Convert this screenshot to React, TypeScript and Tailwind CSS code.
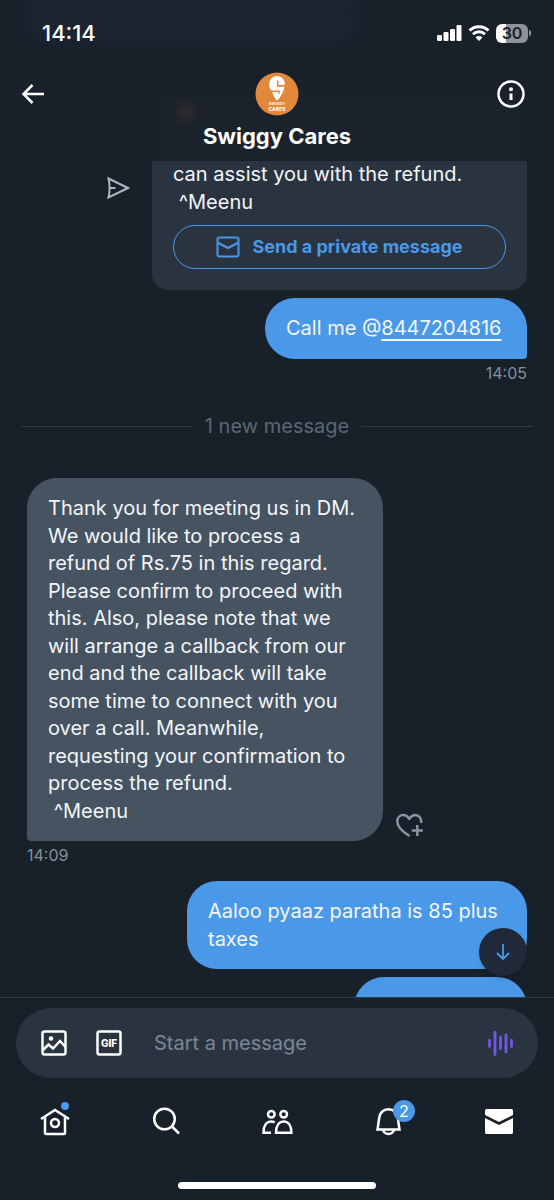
import type { ReactNode } from "react";

type IconProps = { children: ReactNode; className?: string };

function Icon({ children, className = "size-8" }: IconProps) {
  return (
    <svg viewBox="0 0 32 32" className={className} fill="none" stroke="currentColor" strokeWidth="2.5" aria-hidden="true">
      {children}
    </svg>
  );
}

function StatusBar() {
  return (
    <div className="flex items-center justify-between pt-[19px] pr-[23px] pl-[42px]">
      <span className="text-[22px] leading-7 font-medium">14:14</span>
      <div className="flex items-center gap-1.5">
        <svg viewBox="0 0 26 18" className="h-[18px] w-[26px]" fill="currentColor" aria-hidden="true">
          <rect x="1" y="11" width="5" height="6" rx="1.2" />
          <rect x="7.5" y="8" width="5" height="9" rx="1.2" />
          <rect x="14" y="5" width="5" height="12" rx="1.2" />
          <rect x="20.5" y="1" width="5" height="16" rx="1.2" />
        </svg>
        <svg viewBox="0 0 22 18" className="h-[18px] w-[22px]" fill="none" stroke="currentColor" strokeWidth="3" aria-hidden="true">
          <path d="M1.5 6.5a13.6 13.6 0 0 1 19 0" />
          <path d="M5 10.2a8.6 8.6 0 0 1 12 0" />
          <path d="M11 17 7.6 13.5a4.8 4.8 0 0 1 6.8 0Z" fill="currentColor" stroke="none" />
        </svg>
        <div className="flex items-center gap-px">
          <span className="flex h-[19px] w-8 items-center justify-center rounded-md bg-linear-to-r from-white from-30% to-[#8f929b] to-30% text-base font-semibold text-[#1a212b]">
            30
          </span>
          <span className="h-1.5 w-0.5 rounded-r bg-[#8f929b]" />
        </div>
      </div>
    </div>
  );
}

function Avatar() {
  return (
    <svg viewBox="0 0 44 44" className="size-11" role="img" aria-label="Swiggy Cares">
      <circle cx="22" cy="22" r="21.5" fill="#e2883c" />
      <path
        d="M22 28.5c-.6 0-3.6-5-4.6-7.5-.3-.8.1-1 .8-1h5.1v1.8h1.5v-3.3h-8.3c-1.500-1.300-2.300-3.300-2.300-5.700 0-4.800 3.300-8.800 7.800-8.800s7.900 3.700 7.900 8.100c0 .6-.3.9-1 .9h-5.400V8.500h-1.600v6.200h7.500c-.3 4.600-5.800 13.800-7.400 13.800Z"
        fill="#fff"
      />
      <text x="22" y="33" textAnchor="middle" fontSize="4" fontWeight="600" fill="#fff">SWIGGY</text>
      <text x="22" y="38.5" textAnchor="middle" fontSize="5" fontWeight="700" fill="#fff">CARES</text>
    </svg>
  );
}

function Header() {
  return (
    <header className="relative h-[161px] shrink-0 overflow-hidden bg-[#18202a]">
      {/* Messages scrolled under the translucent bar */}
      <div aria-hidden="true" className="absolute inset-0">
        <div className="absolute -top-4 left-6 h-[60px] w-[335px] rounded-3xl bg-[#1b2430] blur-xs" />
        <div className="absolute top-[86px] left-[152px] h-20 w-[375px] rounded-2xl bg-[#1a222c] blur-xs" />
        <div className="absolute top-[102px] left-[176px] size-5 rounded-full bg-[#2d2a29] blur-xs" />
      </div>
      <div className="relative">
        <StatusBar />
        <div className="grid grid-cols-[1fr_auto_1fr] items-start px-[21px] pt-[25px]">
          <button type="button" aria-label="Back" className="justify-self-start pt-2.5">
            <svg viewBox="0 0 24 24" className="size-6" fill="none" stroke="currentColor" strokeWidth="2.5" aria-hidden="true">
              <path d="M11.5 3 2.5 12l9 9M2.5 12H23" />
            </svg>
          </button>
          <div className="flex flex-col items-center">
            <Avatar />
            <h1 className="mt-1.5 text-[22px] leading-7 font-bold">Swiggy Cares</h1>
          </div>
          <button type="button" aria-label="Conversation info" className="mr-2 justify-self-end pt-2">
            <svg viewBox="0 0 28 28" className="size-7" fill="none" stroke="currentColor" strokeWidth="2.5" aria-hidden="true">
              <circle cx="14" cy="14" r="12.5" />
              <path d="M14 13.5V20" strokeWidth="3" />
              <circle cx="14" cy="9.3" r="2" fill="currentColor" stroke="none" />
            </svg>
          </button>
        </div>
      </div>
    </header>
  );
}

function SharedMessage() {
  return (
    <div className="flex items-start justify-end">
      <button type="button" aria-label="Share message" className="mt-[15px] mr-[22px] text-[#a9b8c4]">
        <svg viewBox="0 0 24 24" className="size-6" fill="none" stroke="currentColor" strokeWidth="2" aria-hidden="true">
          <path d="M2.5 2.5 22 12 2.5 21.5C4 15 4 9 2.5 2.5Z" />
          <path d="M3.5 12H9.5" />
        </svg>
      </button>
      <div className="w-3/4 rounded-b-2xl bg-[#2a3340] px-[21px] pb-[21px]">
        <p className="whitespace-pre-line">
          can assist you with the refund.
          {"\n"}&nbsp;^Meenu
        </p>
        <button
          type="button"
          className="mt-[9px] flex h-11 w-full items-center justify-center gap-3 rounded-full border border-[#4a99e9] text-lg font-bold text-[#4a99e9]"
        >
          <svg viewBox="0 0 24 24" className="size-6" fill="none" stroke="currentColor" strokeWidth="2" aria-hidden="true">
            <rect x="1.5" y="2.5" width="21" height="19" rx="2" />
            <path d="M1.5 7.5 12 13 22.5 7.5" />
          </svg>
          Send a private message
        </button>
      </div>
    </div>
  );
}

function Messages() {
  return (
    <main className="relative min-h-0 flex-1">
      <div className="h-full overflow-hidden px-[27px] text-xl leading-snug text-[#f3f6f9]">
        <SharedMessage />

        <div className="mt-2 ml-auto w-[262px] rounded-[30px] rounded-br bg-[#4a99e9] px-[21px] pt-[17px] pb-4">
          Call me @<a href="tel:8447204816" className="underline decoration-2 underline-offset-4">8447204816</a>
        </div>
        <time className="mt-0.5 block text-right text-base text-[#85909c]">14:05</time>

        <div className="-mx-1.5 mt-7 flex items-center gap-3 text-[#5d6874]">
          <span className="h-px flex-1 bg-[#303a45]" />
          1 new message
          <span className="h-px flex-1 bg-[#303a45]" />
        </div>

        <div className="mt-[38px] flex items-end gap-3">
          <p className="w-[356px] rounded-[30px] rounded-bl bg-[#465361] px-[21px] pt-[17px] pb-4 whitespace-pre-line">
            Thank you for meeting us in DM. We would like to process a refund of Rs.75 in this regard. Please confirm to
            proceed with this. Also, please note that we will arrange a callback from our end and the callback will take
            some time to connect with you over a call. Meanwhile, requesting your confirmation to process the refund.
            {"\n"}&nbsp;^Meenu
          </p>
          <button type="button" aria-label="Add reaction" className="text-[#8a94a3]">
            <svg viewBox="0 0 28 28" className="size-7" fill="none" stroke="currentColor" strokeWidth="2.5" aria-hidden="true">
              <path d="M14.5 23C8 19 2.3 14 2.3 8.5c0-4 2.8-6.5 6-6.5 2.5 0 4.3 1.3 6 3.7 1.7-2.4 3.5-3.7 6-3.7 3.4 0 6.2 2.8 6 8" />
              <path d="M22.3 12v11M16.8 17.5h11" />
            </svg>
          </button>
        </div>
        <time className="mt-0.5 block text-base text-[#85909c]">14:09</time>

        <p className="mt-3.5 ml-auto w-[340px] rounded-[30px] bg-[#4a99e9] px-[21px] pt-[17px] pb-4">
          Aaloo pyaaz paratha is 85 plus taxes
        </p>
        <div className="mt-2 ml-auto h-15 w-[173px] rounded-[30px] rounded-br bg-[#4a99e9]" />
      </div>

      <button
        type="button"
        aria-label="Jump to latest message"
        className="absolute right-[27px] bottom-[21px] flex size-12 items-center justify-center rounded-full bg-[#1f2937] text-[#4a99e9] shadow-md"
      >
        <svg viewBox="0 0 16 16" className="size-4" fill="none" stroke="currentColor" strokeWidth="1.8" aria-hidden="true">
          <path d="M8 0v15M2 9l6 6 6-6" />
        </svg>
      </button>
    </main>
  );
}

function Composer() {
  return (
    <div className="border-t border-[#303a45] px-4 pt-2.5">
      <form className="flex h-[70px] items-center rounded-full bg-[#2a3440] pr-6 pl-[25px]">
        <button type="button" aria-label="Add photo">
          <svg viewBox="0 0 26 26" className="size-[26px]" fill="none" stroke="currentColor" strokeWidth="2.5" aria-hidden="true">
            <rect x="1.5" y="1.5" width="23" height="23" rx="2" />
            <path d="m2 20 5.5-5.5 4.5 4 7-7.5 5.5 6" />
            <circle cx="10" cy="8.5" r="2.3" fill="currentColor" stroke="none" />
          </svg>
        </button>
        <button type="button" aria-label="Add GIF" className="ml-[29px]">
          <svg viewBox="0 0 26 26" className="size-[26px]" aria-hidden="true">
            <rect x="1.5" y="1.5" width="23" height="23" rx="2" fill="none" stroke="currentColor" strokeWidth="2.5" />
            <text x="13" y="17" textAnchor="middle" fontSize="10" fontWeight="800" fill="currentColor">GIF</text>
          </svg>
        </button>
        <input
          type="text"
          aria-label="Start a message"
          placeholder="Start a message"
          className="ml-8 min-w-0 flex-1 bg-transparent text-xl outline-none placeholder:text-[#7b8894]"
        />
        <button type="button" aria-label="Record voice message" className="text-[#7357e8]">
          <svg viewBox="0 0 26 26" className="size-[26px]" fill="none" stroke="currentColor" strokeWidth="2.8" strokeLinecap="round" aria-hidden="true">
            <path d="M1.5 10.5v6M7 2.5v22M12.5 7.5v11M18 5v17M23.5 10.5v6" />
          </svg>
        </button>
      </form>
    </div>
  );
}

function TabBar() {
  return (
    <nav className="grid grid-cols-5 pt-7">
      <a href="#home" aria-label="Home" className="flex justify-center">
        <span className="relative">
          <Icon>
            <path d="M2 13 16 4l14 9M6 10.5V27a1 1 0 0 0 1 1h18a1 1 0 0 0 1-1V10.5" />
            <circle cx="16" cy="17" r="4" />
          </Icon>
          <span className="absolute -top-1 right-0.5 size-2 rounded-full bg-[#4a99e9]" />
        </span>
      </a>
      <a href="#search" aria-label="Search" className="flex justify-center">
        <Icon>
          <circle cx="14.5" cy="13" r="10.3" />
          <path d="m22 20.5 7 7" />
        </Icon>
      </a>
      <a href="#communities" aria-label="Communities" className="flex justify-center">
        <Icon>
          <circle cx="10.3" cy="8.3" r="3.3" />
          <circle cx="22.7" cy="8.3" r="3.3" />
          <path d="M10 26.8H2.5c0-7 3-11.2 7.7-11.2 1.3 0 2.5.3 3.5.9" />
          <path d="M15 26.8c0-7 3-11.2 7.7-11.2s7.7 4.2 7.7 11.2Z" />
        </Icon>
      </a>
      <a href="#notifications" aria-label="Notifications, 2 new" className="flex justify-center">
        <span className="relative">
          <Icon>
            <path d="M16.5 3.2c-5.2 0-9 3.8-9.3 8.8L5.5 23.5h22L25.8 12c-.3-5-4.1-8.8-9.3-8.8Z" />
            <path d="M11 24c.7 2.5 2.8 3.9 5.5 3.9s4.800-1.400 5.500-3.900" />
          </Icon>
          <span className="absolute -top-1.5 -right-[11px] flex size-[22px] items-center justify-center rounded-full bg-[#4a99e9] text-base">
            2
          </span>
        </span>
      </a>
      <a href="#messages" aria-label="Messages" className="flex justify-center">
        <svg viewBox="0 0 32 32" className="size-8" fill="currentColor" aria-hidden="true">
          <path d="M2 9V4.5A1.5 1.5 0 0 1 3.5 3h25A1.5 1.5 0 0 1 30 4.5V9l-14 7Z" />
          <path d="m2 12 14 7 14-7v14.5a1.5 1.5 0 0 1-1.5 1.5h-25A1.5 1.5 0 0 1 2 26.5Z" />
        </svg>
      </a>
    </nav>
  );
}

export default function App() {
  return (
    <div className="flex h-screen flex-col overflow-hidden bg-[#18202a] font-['Inter','Liberation_Sans',sans-serif] text-white">
      <Header />
      <Messages />
      <footer className="shrink-0">
        <Composer />
        <TabBar />
        <div className="mx-auto mt-11 mb-[11px] h-[7px] w-[198px] rounded-full bg-white" />
      </footer>
    </div>
  );
}
